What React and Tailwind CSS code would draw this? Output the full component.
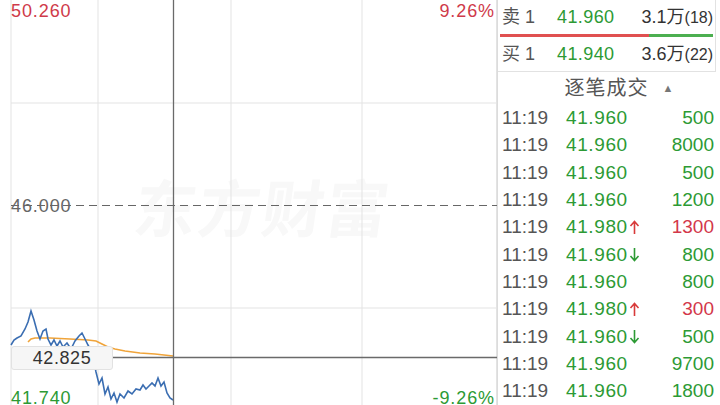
import React from 'react';

const font = { fontFamily: '"Liberation Sans", "Noto Sans CJK SC", sans-serif' };

const trades = [
  ['11:19', '41.960', '', '500', 'g'],
  ['11:19', '41.960', '', '8000', 'g'],
  ['11:19', '41.960', '', '500', 'g'],
  ['11:19', '41.960', '', '1200', 'g'],
  ['11:19', '41.980', 'up', '1300', 'r'],
  ['11:19', '41.960', 'down', '800', 'g'],
  ['11:19', '41.960', '', '800', 'g'],
  ['11:19', '41.980', 'up', '300', 'r'],
  ['11:19', '41.960', 'down', '500', 'g'],
  ['11:19', '41.960', '', '9700', 'g'],
  ['11:19', '41.960', '', '1800', 'g'],
];

// intraday price path (blue) and average price (orange)
const pricePts = [
  [11, 345], [14, 340], [17, 338], [21, 336], [25, 329], [28, 322], [31, 311], [34, 320], [37, 331],
  [40, 339], [43, 331], [46, 329], [48, 339], [51, 345], [54, 340], [57, 346], [60, 341], [63, 347],
  [67, 343], [71, 349], [75, 341], [79, 336], [82, 333], [85, 339], [88, 345], [92, 352], [96, 372],
  [99, 384], [102, 378], [105, 394], [108, 387], [111, 399], [114, 393], [117, 402], [120, 394],
  [124, 398], [128, 391], [132, 394], [136, 389], [140, 390], [143, 385], [146, 389], [149, 386],
  [152, 383], [155, 386], [158, 378], [161, 386], [164, 382], [167, 393], [170, 398], [173, 400],
];

const avgPts = [
  [28, 342], [31, 339], [35, 338], [50, 338], [70, 339], [88, 340], [96, 341], [102, 344], [108, 347],
  [115, 349], [125, 351], [140, 353], [155, 354], [173, 356],
];

const toPath = (pts) => pts.map((p, i) => `${i ? 'L' : 'M'}${p[0]} ${p[1]}`).join(' ');

const axisText = 'absolute text-[18px] leading-none tracking-[0.9px]';

function Chart() {
  return (
    <div className="relative h-full w-[497px] shrink-0">
      <svg className="absolute inset-0" width="497" height="405" viewBox="0 0 497 405">
        {/* watermark */}
        <text x="134" y="232" fontSize="62" fontWeight="700" fill="#f8f8f8"
          fontFamily='"Noto Sans CJK SC", sans-serif' letterSpacing="2" transform="skewX(-8) translate(30 0)">东方财富</text>
        {[11, 98, 231, 362, 496.5].map((x) => (
          <line key={x} x1={x} y1="0" x2={x} y2="405" stroke="#e3e3e3" strokeWidth="1" />
        ))}
        {[103, 308].map((y) => (
          <line key={y} x1="11" y1={y} x2="497" y2={y} stroke="#e3e3e3" strokeWidth="1" />
        ))}
        <line x1="11" y1="205.5" x2="497" y2="205.5" stroke="#666" strokeWidth="1.2" strokeDasharray="8 5" />
        <path d={toPath(avgPts)} fill="none" stroke="#f0a43a" strokeWidth="1.6" />
        <path d={toPath(pricePts)} fill="none" stroke="#3b6eb2" strokeWidth="1.6" />
        {/* crosshair */}
        <line x1="173.5" y1="0" x2="173.5" y2="405" stroke="#6a6a6a" strokeWidth="1.3" />
        <line x1="113" y1="357.5" x2="497" y2="357.5" stroke="#6a6a6a" strokeWidth="1.3" />
      </svg>

      <div className={`${axisText} left-[11px] top-[2px] text-[#cf3a4a]`}>50.260</div>
      <div className={`${axisText} right-[2px] top-[2px] text-[#cf3a4a]`}>9.26%</div>
      <div className={`${axisText} left-[11px] top-[197px] text-[#666]`}>46.000</div>
      <div className={`${axisText} left-[11px] top-[389px] text-[#2c9a34]`}>41.740</div>
      <div className={`${axisText} right-[2px] top-[389px] text-[#2c9a34]`}>-9.26%</div>

      <div className="absolute left-[11px] top-[346px] flex h-[24px] w-[102px] items-center justify-center rounded-[3px] border border-[#e2e2e2] bg-[#f6f6f6] text-[18px] tracking-[0.6px] text-[#333]">
        42.825
      </div>
    </div>
  );
}

function Quote({ label, price, vol, count }) {
  return (
    <div className="flex h-[34px] items-center pl-[4px] pr-[2px] text-[18px]">
      <span className="w-[55px] text-[#555]">{label} 1</span>
      <span className="text-[#2c9a34] tracking-[0.4px]">{price}</span>
      <span className="ml-auto text-[#333]">{vol}<span className="text-[16px]">({count})</span></span>
    </div>
  );
}

function Arrow({ dir }) {
  if (!dir) return null;
  const up = dir === 'up';
  return (
    <svg width="11" height="15" viewBox="0 0 11 15" className="ml-[1px] inline-block"
      stroke={up ? '#d83a3a' : '#2c9a34'} strokeWidth="1.6" fill="none">
      {up ? <path d="M5.5 14V2 M1.5 6l4-4.5 4 4.5" /> : <path d="M5.5 1v12 M1.5 9l4 4.5 4-4.5" />}
    </svg>
  );
}

function TradeList() {
  return (
    <div className="flex flex-col">
      {trades.map(([t, p, dir, v, c], i) => (
        <div key={i} className="flex h-[27.3px] items-center pl-[4px] pr-[6px] text-[19px]">
          <span className="w-[64px] text-[#555]">{t}</span>
          <span className="flex items-center text-[#2c9a34] tracking-[0.6px]">{p}<Arrow dir={dir} /></span>
          <span className={`ml-auto ${c === 'r' ? 'text-[#d3374a]' : 'text-[#2c9a34]'}`}>{v}</span>
        </div>
      ))}
    </div>
  );
}

export default function App() {
  return (
    <div className="flex h-[405px] w-[720px] overflow-hidden bg-white" style={font}>
      <Chart />
      <div className="flex flex-1 flex-col border-l border-[#dcdcdc]">
        <div className="mr-[4px] border-r border-b border-[#e2e2e2]">
          <Quote label="卖" price="41.960" vol="3.1万" count="18" />
          <div className="mx-[2px] flex h-[3px]">
            <div className="w-[149px] bg-[#e05050]" />
            <div className="flex-1 bg-[#4caf50]" />
          </div>
          <Quote label="买" price="41.940" vol="3.6万" count="22" />
        </div>
        <div className="flex h-[34px] items-center justify-center gap-[14px] pl-[20px] text-[20px] text-[#555]">
          <span className="tracking-[1px]">逐笔成交</span>
          <span className="text-[11px] text-[#777]">▲</span>
        </div>
        <TradeList />
      </div>
    </div>
  );
}
